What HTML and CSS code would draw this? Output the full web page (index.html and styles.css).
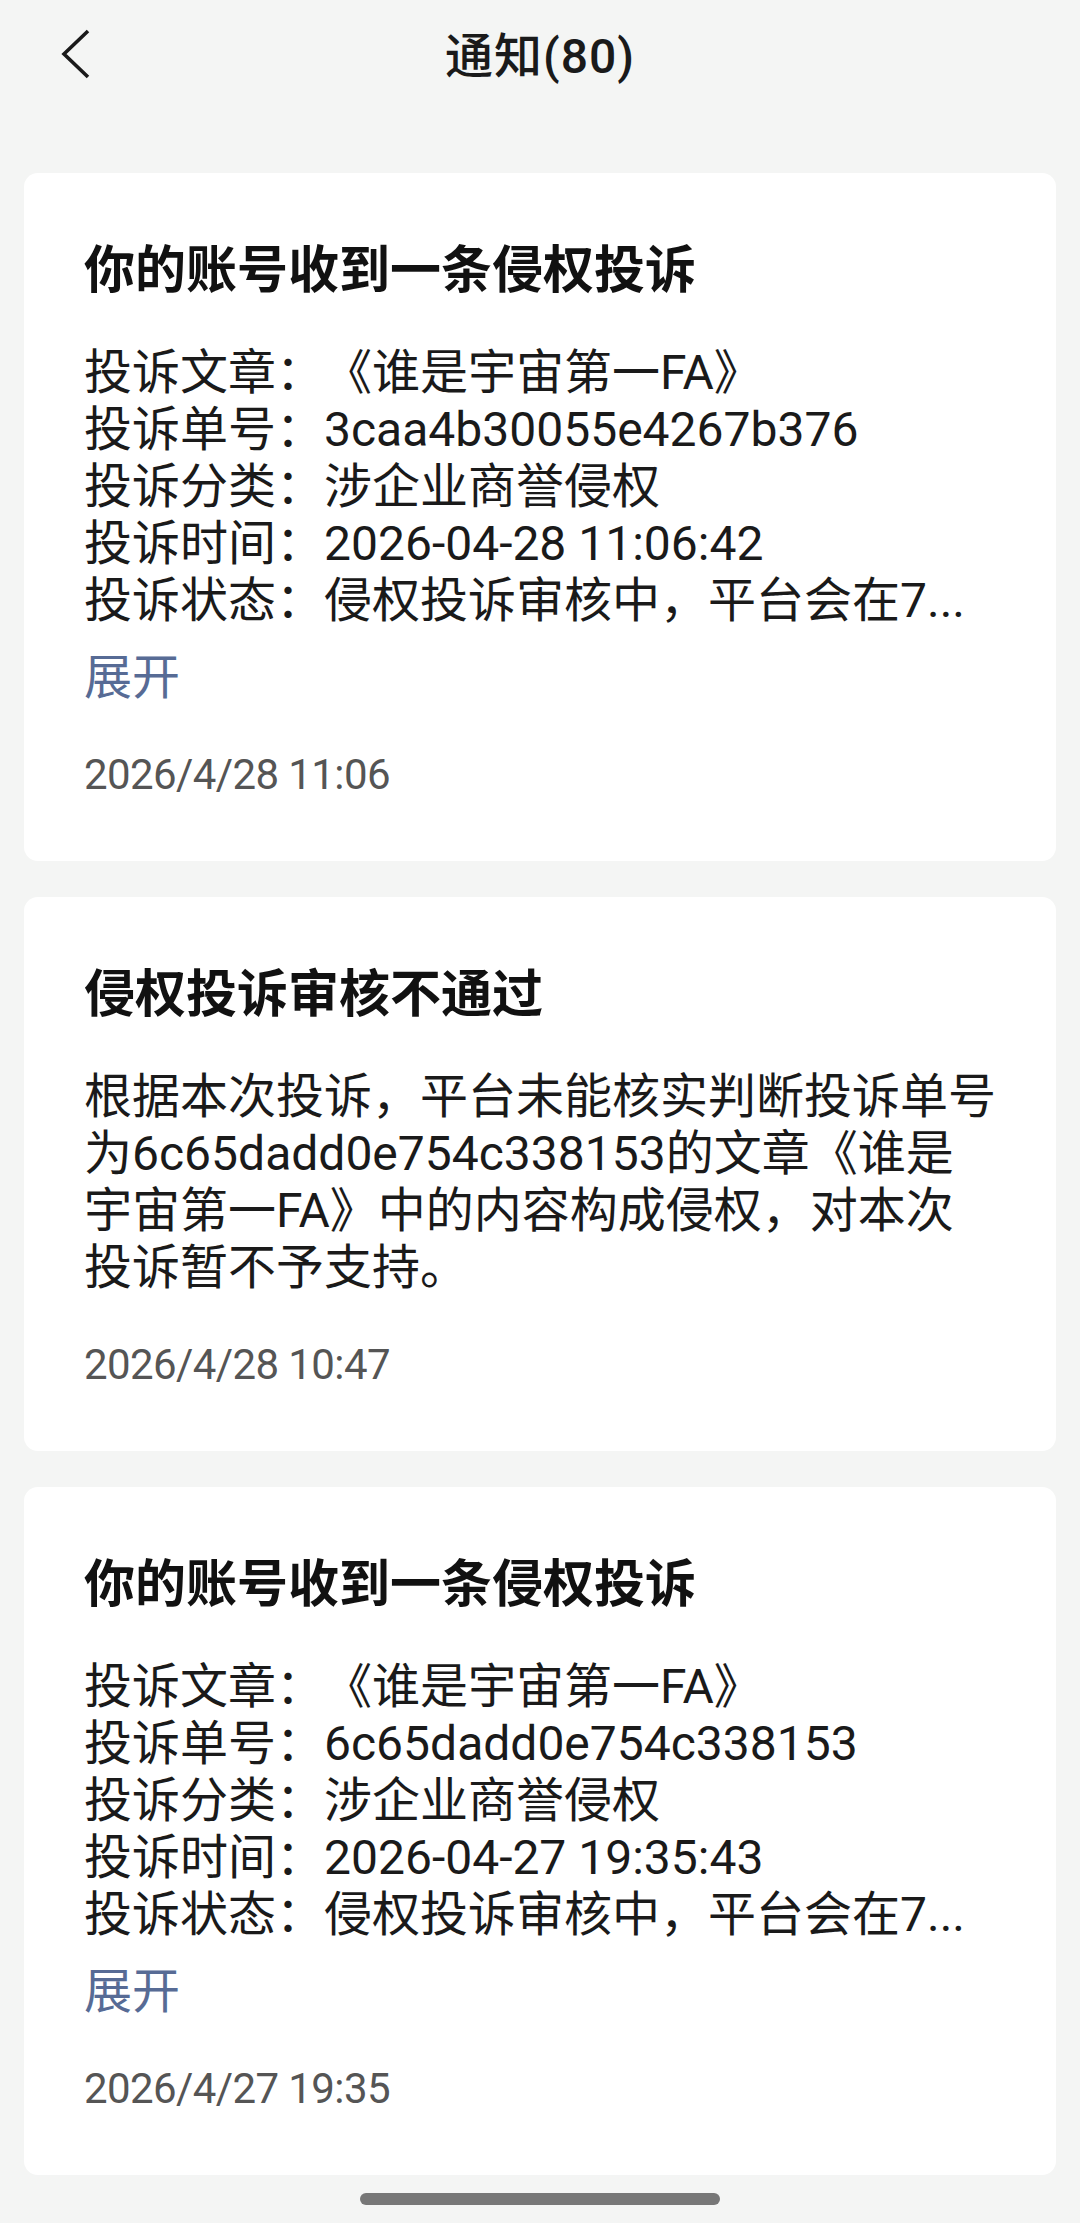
FILE: index.html
```html
<!DOCTYPE html>
<html>
<head>
    <meta charset="utf-8">
    <title>通知</title>
    <link rel="stylesheet" href="styles.css">
</head>
<body>
    <!-- top bar -->
    <header class="topbar">
        <a class="back" href="#">
            <svg width="40" height="60" viewBox="0 0 40 60">
                <polyline points="30,6 6,29 30,52" fill="none" stroke="#1a1a1a" stroke-width="3.6" stroke-linecap="butt" stroke-linejoin="miter"/>
            </svg>
        </a>
        <h1 class="page-title">通知(80)</h1>
    </header>

    <!-- notice list -->
    <main class="notice-list">
        <section class="notice-card">
            <h2 class="notice-title">你的账号收到一条侵权投诉</h2>
            <ul class="notice-info">
                <li>投诉文章：《谁是宇宙第一FA》</li>
                <li>投诉单号：3caa4b30055e4267b376</li>
                <li>投诉分类：涉企业商誉侵权</li>
                <li>投诉时间：2026-04-28 11:06:42</li>
                <li>投诉状态：侵权投诉审核中，平台会在7...</li>
            </ul>
            <a class="notice-more" href="#">展开</a>
            <p class="notice-time">2026/4/28 11:06</p>
        </section>

        <section class="notice-card">
            <h2 class="notice-title">侵权投诉审核不通过</h2>
            <p class="notice-text">根据本次投诉，平台未能核实判断投诉单号为6c65dadd0e754c338153的文章《谁是宇宙第一FA》中的内容构成侵权，对本次投诉暂不予支持。</p>
            <p class="notice-time">2026/4/28 10:47</p>
        </section>

        <section class="notice-card">
            <h2 class="notice-title">你的账号收到一条侵权投诉</h2>
            <ul class="notice-info">
                <li>投诉文章：《谁是宇宙第一FA》</li>
                <li>投诉单号：6c65dadd0e754c338153</li>
                <li>投诉分类：涉企业商誉侵权</li>
                <li>投诉时间：2026-04-27 19:35:43</li>
                <li>投诉状态：侵权投诉审核中，平台会在7...</li>
            </ul>
            <a class="notice-more" href="#">展开</a>
            <p class="notice-time">2026/4/27 19:35</p>
        </section>
    </main>

    <div class="home-bar"></div>
</body>
</html>
```

FILE: styles.css
```css
/* reset */
* {
  padding: 0;
  margin: 0;
  box-sizing: border-box;
  text-decoration: none;
  list-style: none;
}

body {
  font-family: Roboto, "Noto Sans CJK SC", sans-serif;
  background: #f4f5f4;
  color: #1a1a1a;
  overflow: hidden;
  text-spacing-trim: space-all;
}

/* top bar */
.topbar {
  height: 114px;
  display: flex;
  align-items: center;
  justify-content: center;
  position: relative;
}

.back {
  position: absolute;
  left: 58px;
  top: 25px;
  display: block;
  width: 40px;
  height: 60px;
}

.page-title {
  font-size: 48px;
  font-weight: 500;
  line-height: 60px;
  letter-spacing: 1px;
  color: #1a1a1a;
}

/* notice list */
.notice-list {
  display: flex;
  flex-direction: column;
  gap: 36px;
  padding: 59px 24px 0;
}

.notice-card {
  background: #ffffff;
  border-radius: 14px;
  padding: 67px 58px 61px 60px;
}

.notice-title {
  font-size: 51px;
  font-weight: 700;
  line-height: 62px;
  color: #111111;
}

.notice-info {
  margin-top: 42px;
  font-size: 48px;
  line-height: 57px;
}

.notice-info li {
  white-space: nowrap;
  overflow: hidden;
}

.notice-text {
  margin-top: 42px;
  font-size: 48px;
  line-height: 57px;
}

.notice-more {
  display: block;
  margin-top: 20px;
  font-size: 48px;
  line-height: 57px;
  color: #576b95;
}

.notice-time {
  margin-top: 44px;
  font-size: 42px;
  line-height: 50px;
  letter-spacing: -0.6px;
  color: #555555;
}

/* gesture bar */
.home-bar {
  width: 360px;
  height: 12px;
  margin: 18px auto 0;
  border-radius: 6px;
  background: #777777;
}
```
